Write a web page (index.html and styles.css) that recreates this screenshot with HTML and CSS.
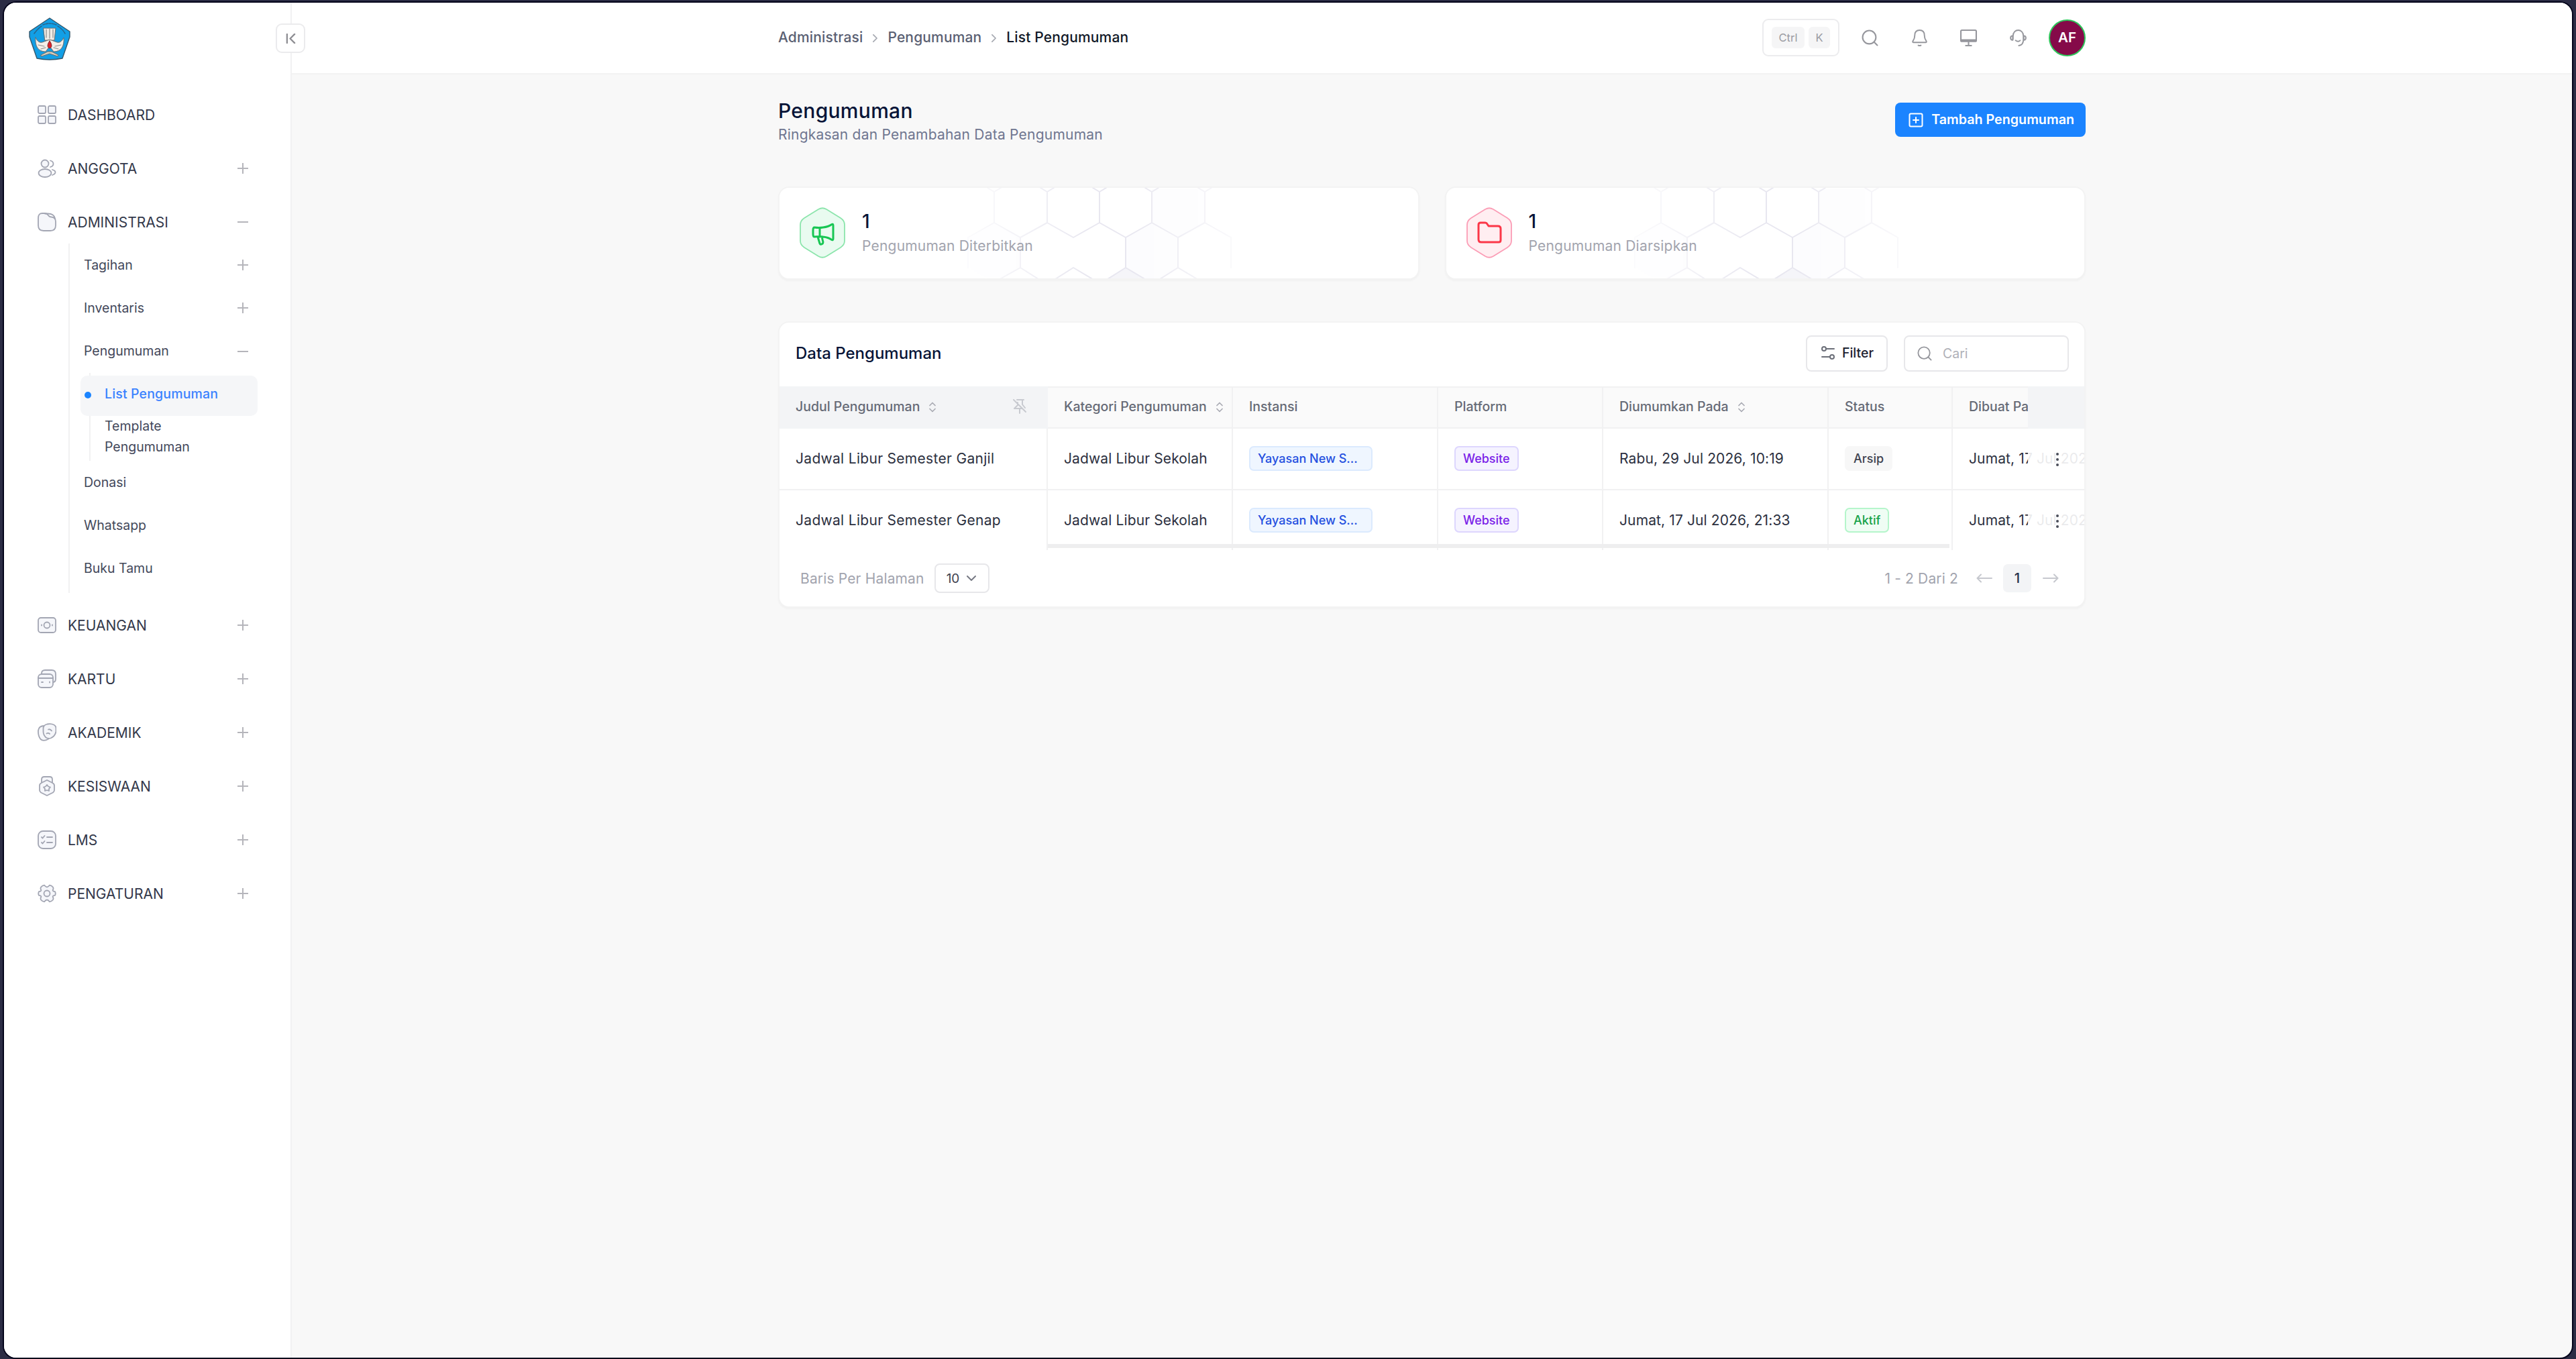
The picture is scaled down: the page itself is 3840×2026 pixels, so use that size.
FILE: index.html
```html
<!DOCTYPE html>
<html lang="id">
<head>
  <meta charset="UTF-8" />
  <meta name="viewport" content="width=device-width, initial-scale=1.0"/>
  <title>List Pengumuman</title>
  <link rel="stylesheet" href="styles.css">
</head>
<body>
  <!-- shared icons -->
  <svg class="sprite" aria-hidden="true">
    <symbol id="plus" viewBox="0 0 16 16"><path d="M8 0v16M0 8h16"/></symbol>
    <symbol id="minus" viewBox="0 0 16 16"><path d="M0 8h16"/></symbol>
    <symbol id="sort" viewBox="0 0 10 16"><path d="M1 5.5l4-4 4 4M1 10.5l4 4 4-4"/></symbol>
    <symbol id="search" viewBox="0 0 24 24"><circle cx="11" cy="11" r="9.5"/><path d="M18 18l4.5 4.5"/></symbol>
    <symbol id="dots" viewBox="0 0 6 24"><circle cx="3" cy="4" r="2"/><circle cx="3" cy="12" r="2"/><circle cx="3" cy="20" r="2"/></symbol>
    <symbol id="honeycomb" viewBox="0 0 953 138">
      <path class="comb-fill" d="M281 73l39-21 39 22v45l-39 20h-5l-34-20zM516 74l39-22 39 22v45l-28 17h-22l-28-17zM555 2h78v50l-39 22-39-22z"/>
      <path class="comb-dark" d="M516 119l-32 19h64z"/>
      <path d="M320 6v46l39 22 40-22 39 22 39-22 39 22 39-22 39 22 40-22 39 22M399 6v46M477 6v46M555 6v46M634 6v46"/>
      <path d="M310 0l10 6 10-6M389 0l10 6 10-6M467 0l10 6 10-6M545 0l10 6 10-6M624 0l10 6 10-6"/>
      <path d="M320 52l-39 22v45M359 74v45M516 74v45M594 74v45M673 74v45M325 138l34-19 30 19M408 138l30-19 32 19M486 138l30-19 32 19M564 138l30-19 32 19"/>
    </symbol>
  </svg>

  <div class="window">
    <aside class="sidebar">
      <div class="brand">
        <svg class="logo" viewBox="0 0 62 64">
          <path d="M31 1L61 21v8L50 61q-19 4-38 0L1 29v-8z" fill="#129fe6" stroke="#35576b" stroke-width="1.4" stroke-linejoin="round"/>
          <path d="M8 24q5-7 11-11M21 11q10-4 20 0M43 13q7 4 11 11" fill="none" stroke="#28668c" stroke-width="1.6" stroke-dasharray="3 1.5"/>
          <path d="M22 16h18l-2 18H24z" fill="#f0ece6" stroke="#6b6b6b" stroke-width="1"/>
          <path d="M26 18v12M31 17v14M36 18v12" stroke="#8b8b8b" stroke-width="1.2" fill="none"/>
          <path d="M10 30c-1 12 3 21 15 21l6-8 6 8c12 0 16-9 15-21-3 6-6 8-10 7l-11-4-11 4c-4 1-7-1-10-7z" fill="#f3efe9" stroke="#6b6b6b" stroke-width="1"/>
          <path d="M14 41l9 2M18 47l7-2M48 41l-9 2M44 47l-7-2" stroke="#8f8f8f" stroke-width="1.2" fill="none"/>
          <path d="M31 35c4 5 4 10 0 11-4-1-4-6 0-11z" fill="#d9232b" stroke="#6d1d1d" stroke-width=".8"/>
          <path d="M18 56l10-5h6l10 5-1 2-12-4-12 4z" fill="#d9cfbf" stroke="#6b6b6b" stroke-width="1"/>
        </svg>
        <button class="collapse" aria-label="Tutup menu"><svg viewBox="0 0 16 16"><path d="M2 1v14M14 1L7 8l7 7"/></svg></button>
      </div>

      <nav class="nav">
        <a class="nav-item">
          <svg class="nav-icon" viewBox="0 0 28 28"><rect x="1" y="1" width="11" height="11" rx="2"/><rect x="16" y="1" width="11" height="11" rx="2"/><rect x="1" y="16" width="11" height="11" rx="2"/><rect x="16" y="16" width="11" height="11" rx="2"/></svg>
          <span>DASHBOARD</span>
        </a>
        <a class="nav-item">
          <svg class="nav-icon" viewBox="0 0 28 28"><circle cx="11" cy="7" r="5.5"/><ellipse cx="11" cy="21" rx="9.5" ry="6"/><path class="line" d="M19 2.500c6 1.500 6 8 0 9.500M22 16c6 1.500 6 6 0 8"/></svg>
          <span>ANGGOTA</span><svg class="toggle"><use href="#plus"/></svg>
        </a>
        <div class="nav-group">
          <a class="nav-item">
            <svg class="nav-icon" viewBox="0 0 28 28"><path d="M1 8q0-7 6-7h4q3 0 5 3 1.500 2.500 4.500 2.500 6.500.5 6.500 7V19q0 8-8 8H9q-8 0-8-8z"/><path class="line" d="M11 1.500h5q8 0 10 7"/></svg>
            <span>ADMINISTRASI</span><svg class="toggle"><use href="#minus"/></svg>
          </a>
          <div class="submenu">
            <a class="sub-item"><span>Tagihan</span><svg class="toggle"><use href="#plus"/></svg></a>
            <a class="sub-item"><span>Inventaris</span><svg class="toggle"><use href="#plus"/></svg></a>
            <a class="sub-item"><span>Pengumuman</span><svg class="toggle"><use href="#minus"/></svg></a>
            <div class="nested">
              <a class="nested-item active">List Pengumuman</a>
              <a class="nested-item">Template Pengumuman</a>
            </div>
            <a class="sub-item"><span>Donasi</span></a>
            <a class="sub-item"><span>Whatsapp</span></a>
            <a class="sub-item"><span>Buku Tamu</span></a>
          </div>
        </div>
        <a class="nav-item">
          <svg class="nav-icon" viewBox="0 0 28 28"><rect x="1" y="3" width="26" height="22" rx="4"/><circle cx="14" cy="14" r="4.500"/><path class="line" d="M6 13.500v1M22 13.500v1"/></svg>
          <span>KEUANGAN</span><svg class="toggle"><use href="#plus"/></svg>
        </a>
        <a class="nav-item">
          <svg class="nav-icon" viewBox="0 0 28 28"><path d="M6 6q0-5 5-5h10q6 0 6 6v7q0 5-4 5"/><rect x="1" y="7" width="22" height="20" rx="5"/><path class="line" d="M1 13h22M6 19h2M18 18.500v1"/></svg>
          <span>KARTU</span><svg class="toggle"><use href="#plus"/></svg>
        </a>
        <a class="nav-item">
          <svg class="nav-icon" viewBox="0 0 28 28"><path d="M10 4q-8 0-9 7-.5 8 3.500 13 4 4 12-.5z"/><path d="M8.500 8q0-5 6-6.500 4-.8 7 0 6 1.500 6 6v5q-1 7-8 10-4 1-7-1-4-4-4-9z"/><path class="line" d="M16 9.500q3-1 5 2M13.500 15.500q2.500-1.500 4.500.5"/></svg>
          <span>AKADEMIK</span><svg class="toggle"><use href="#plus"/></svg>
        </a>
        <a class="nav-item">
          <svg class="nav-icon tall" viewBox="0 0 28 30"><path d="M6 10V5q0-4 4-4h8q4 0 4 4v5"/><path d="M14 6l8 4q3 1.500 3 4v7q0 2-2 3.500L14 29l-9-4.500q-2-1.500-2-3.500v-7q0-2.500 3-4z"/><path d="M14 13l2 2.500 3 1-2 2.500v3l-3-1-3 1v-3l-2-2.500 3-1z"/></svg>
          <span>KESISWAAN</span><svg class="toggle"><use href="#plus"/></svg>
        </a>
        <a class="nav-item">
          <svg class="nav-icon" viewBox="0 0 28 28"><rect x="1" y="1" width="26" height="26" rx="7"/><path class="line" d="M6 10l1.500 1.500 3-3.500M14 10h8M6 18l1.500 1.500 3-3.500M14 18h8"/></svg>
          <span>LMS</span><svg class="toggle"><use href="#plus"/></svg>
        </a>
        <a class="nav-item">
          <svg class="nav-icon" viewBox="0 0 28 28"><path d="M26 11.100q1.500 2.900 0 5.800-3.500.3-3.300 2.100 1.500 2.500.2 4.500-2 2.500-5.100 2.900-1.800-2.900-3.800-2.900t-3.800 2.900q-3.100-.4-5.100-2.900-1.300-2 .2-4.500.2-1.800-3.300-2.100-1.500-2.900 0-5.800Q5.500 10.800 5.300 9q-1.500-2.500-.2-4.500 2-2.500 5.100-2.900Q12 4.500 14 4.500t3.800-2.900q3.100.4 5.100 2.900 1.300 2-.2 4.500-.2 1.800 3.300 2.100z"/><circle cx="14" cy="14" r="4.500"/></svg>
          <span>PENGATURAN</span><svg class="toggle"><use href="#plus"/></svg>
        </a>
      </nav>
    </aside>

    <div class="page">
      <header class="topbar">
        <div class="container topbar-inner">
          <div class="breadcrumb">
            <span>Administrasi</span>
            <svg viewBox="0 0 8 14"><path d="M1 1l6 6-6 6"/></svg>
            <span>Pengumuman</span>
            <svg viewBox="0 0 8 14"><path d="M1 1l6 6-6 6"/></svg>
            <span class="current">List Pengumuman</span>
          </div>
          <div class="tools">
            <div class="shortcut"><kbd>Ctrl</kbd><kbd>K</kbd></div>
            <svg class="tool"><use href="#search"/></svg>
            <svg class="tool" viewBox="0 0 24 26"><path d="M12 1C6 1 4.500 5 4.500 9c0 5-1 6-3 9-.5 1.500 0 2 1 2h19c1 0 1.500-.5 1-2-2-3-3-4-3-9 0-4-1.500-8-7.500-8z"/><path d="M10 24.500q2 1 4 0"/></svg>
            <svg class="tool" viewBox="0 0 24 24"><rect x="1" y="1" width="22" height="16" rx="1.500"/><path d="M1 15h22v1H1zM12 18v4M8 23h8"/></svg>
            <svg class="tool" viewBox="0 0 26 26"><path d="M5 15V10c0-12 16-12 16 0v5M4.500 9.500C0 10 0 16 4.500 16.500zM21.500 9.500c4.500.5 4.500 6.500 0 7zM21 16c0 5-2 8-7 9M9 17q4 3 7 0"/></svg>
            <div class="avatar">AF</div>
          </div>
        </div>
      </header>

      <main class="container">
        <div class="page-head">
          <div>
            <h1>Pengumuman</h1>
            <p>Ringkasan dan Penambahan Data Pengumuman</p>
          </div>
          <button class="btn-primary">
            <svg viewBox="0 0 22 22"><rect x="1.500" y="1.500" width="19" height="19" rx="2"/><path d="M11 7v8M7 11h8"/></svg>
            Tambah Pengumuman
          </button>
        </div>

        <div class="stats">
          <div class="card stat">
            <svg class="comb"><use href="#honeycomb"/></svg>
            <svg class="stat-icon green" viewBox="0 0 68 76">
              <path class="hex" d="M28 3q6-3.500 12 0l21 13q6 4 6 10v24q0 6-6 10L40 73q-6 3.500-12 0L7 60q-6-4-6-10V26q0-6 6-10z"/>
              <path d="M22 30q7 1 13 0 8-1 12-4 3-2 3 1v20q0 3-3 1-4-3-12-4-6-1-13 0-2 0-2-4v-6q0-4 2-4zM30 31v13M27 44l3 10q1 2 3 1t2-3l-2-8"/>
            </svg>
            <div>
              <div class="stat-value">1</div>
              <div class="stat-label">Pengumuman Diterbitkan</div>
            </div>
          </div>
          <div class="card stat">
            <svg class="comb"><use href="#honeycomb"/></svg>
            <svg class="stat-icon red" viewBox="0 0 68 76">
              <path class="hex" d="M28 3q6-3.500 12 0l21 13q6 4 6 10v24q0 6-6 10L40 73q-6 3.500-12 0L7 60q-6-4-6-10V26q0-6 6-10z"/>
              <path d="M18 26q0-3 3-3h7q2 0 3 2l2 3h14q4 0 4 4v17q0 3-3 3H22q-4 0-4-4z"/>
            </svg>
            <div>
              <div class="stat-value">1</div>
              <div class="stat-label">Pengumuman Diarsipkan</div>
            </div>
          </div>
        </div>

        <section class="card table-card">
          <div class="table-head">
            <h2>Data Pengumuman</h2>
            <button class="btn-filter">
              <svg viewBox="0 0 20 22"><circle cx="4" cy="5" r="3"/><path d="M7 5h12M1 17h12"/><circle cx="16" cy="17" r="3"/></svg>
              Filter
            </button>
            <div class="search"><svg><use href="#search"/></svg><span>Cari</span></div>
          </div>

          <div class="table-wrap">
            <table>
              <colgroup>
                <col class="c-title"><col class="c-kategori"><col class="c-instansi"><col class="c-platform"><col class="c-tanggal"><col class="c-status"><col class="c-dibuat"><col class="c-aksi">
              </colgroup>
              <thead>
                <tr>
                  <th class="pinned"><div class="th">Judul Pengumuman <svg class="sort"><use href="#sort"/></svg>
                    <svg class="pin" viewBox="0 0 20 22"><path d="M1 1l18 18M6 1h10M14 1v7l4 5M7 5v4l-5 5h11M10 14v7"/></svg></div></th>
                  <th><div class="th">Kategori Pengumuman <svg class="sort"><use href="#sort"/></svg></div></th>
                  <th>Instansi</th>
                  <th>Platform</th>
                  <th><div class="th">Diumumkan Pada <svg class="sort"><use href="#sort"/></svg></div></th>
                  <th>Status</th>
                  <th>Dibuat Pada</th>
                  <th class="action"></th>
                </tr>
              </thead>
              <tbody>
                <tr>
                  <td class="pinned">Jadwal Libur Semester Ganjil</td>
                  <td>Jadwal Libur Sekolah</td>
                  <td><span class="badge blue">Yayasan New S...</span></td>
                  <td><span class="badge purple">Website</span></td>
                  <td>Rabu, 29 Jul 2026, 10:19</td>
                  <td><span class="badge gray">Arsip</span></td>
                  <td>Jumat, 17 Jul 2026, 21:33</td>
                  <td class="action"><svg class="dots"><use href="#dots"/></svg></td>
                </tr>
                <tr>
                  <td class="pinned">Jadwal Libur Semester Genap</td>
                  <td>Jadwal Libur Sekolah</td>
                  <td><span class="badge blue">Yayasan New S...</span></td>
                  <td><span class="badge purple">Website</span></td>
                  <td>Jumat, 17 Jul 2026, 21:33</td>
                  <td><span class="badge success">Aktif</span></td>
                  <td>Jumat, 17 Jul 2026, 21:33</td>
                  <td class="action"><svg class="dots"><use href="#dots"/></svg></td>
                </tr>
              </tbody>
            </table>
            <div class="scrollbar"></div>
          </div>

          <div class="pagination">
            <span>Baris Per Halaman</span>
            <div class="select">10 <svg viewBox="0 0 14 10"><path d="M1 2l6 6 6-6"/></svg></div>
            <span class="range">1 - 2 Dari 2</span>
            <svg class="arrow" viewBox="0 0 24 14"><path d="M23 7H2M7 1.500L1.500 7 7 12.500"/></svg>
            <div class="page-no">1</div>
            <svg class="arrow" viewBox="0 0 24 14"><path d="M1 7h21M17 1.500L22.500 7 17 12.500"/></svg>
          </div>
        </section>
      </main>
    </div>
  </div>
</body>
</html>
```
FILE: styles.css
```css
:root {
  --blue: #1b84ff; --text: #252f4a; --dark: #071437; --muted: #a2a4ae;
  --border: #f1f1f2; --bg: #f8f8f8; --icon: #a3a6b3;
}
* { box-sizing: border-box; }
body { margin: 0; height: 2026px; padding: 4px 6px 2px; background: #2b2c44; font-family: Inter, sans-serif; font-size: 21px; color: var(--text); overflow: hidden; }
h1, h2, p { margin: 0; font-weight: 500; }
button { font-family: inherit; cursor: pointer; }
svg { fill: none; stroke: currentColor; stroke-width: 2; stroke-linecap: round; stroke-linejoin: round; flex: none; }
.sprite { position: absolute; width: 0; height: 0; }
.window { display: flex; height: 2020px; background: var(--bg); border-radius: 18px; box-shadow: 0 0 0 2px #04041a; }

/* Sidebar */
.sidebar { width: 429px; background: #fff; border-right: 2px solid var(--border); border-radius: 18px 0 0 18px; }
.brand { display: flex; align-items: flex-start; justify-content: space-between; height: 135px; padding: 22px 0 0 37px; }
.logo { width: 62px; height: 64px; }
.collapse { display: flex; align-items: center; justify-content: center; width: 44px; height: 44px; margin: 9px -22px 0 0; background: #fff; border: 2px solid #ebebed; border-radius: 9px; color: #8e8e93; position: relative; z-index: 1; }
.collapse svg { width: 15px; height: 15px; stroke-width: 2.5; }
.nav { display: flex; flex-direction: column; gap: 16px; padding: 0 49px 0 50px; }
.nav-item { display: flex; align-items: center; height: 64px; padding-right: 14px; color: #33384a; }
.nav-item span, .sub-item span { flex: 1; }
.nav-icon { width: 28px; height: 28px; margin-right: 17px; color: var(--icon); fill: #f5f6fa; stroke-width: 1.8; }
.nav-icon.tall { height: 30px; }
.nav-icon .line { fill: none; }
.toggle { width: 16px; height: 16px; color: #b5b5bb; }
.submenu { margin-left: 46px; padding-left: 21px; border-left: 2px solid var(--border); height: 521px; font-size: 19.5px; color: #43485a; }
.sub-item { display: flex; align-items: center; height: 64.3px; padding-right: 14px; }
.sub-item span { padding-bottom: 1px; }
.nested { margin: 0 0 0 8px; padding: 4px 0 5px; border-left: 2px solid var(--border); }
.nested-item { display: block; padding-left: 21px; padding-right: 80px; line-height: 31px; }
.nested-item.active { display: flex; align-items: center; height: 60px; margin-left: -15px; padding: 0 0 5px 6px; background: #f5f6f8; border-radius: 10px; color: #3b82ff; font-weight: 500; letter-spacing: 0.15px; position: relative; }
.nested-item.active::before { content: ""; width: 10px; height: 10px; margin: 4px 20px 0 0; border-radius: 50%; background: var(--blue); }

/* Topbar */
.page { flex: 1; min-width: 0; }
.container { width: 1949px; margin: 0 auto; }
.topbar { height: 107px; background: #fff; border-bottom: 2px solid #f3f3f3; border-radius: 0 18px 0 0; }
.topbar-inner { display: flex; align-items: center; justify-content: space-between; height: 104px; }
.breadcrumb { display: flex; align-items: center; gap: 15px; padding-bottom: 2px; color: #5a6072; font-weight: 500; font-size: 21px; letter-spacing: 0.15px; }
.breadcrumb svg { width: 7px; height: 12px; color: #a5a8b0; margin-top: 4px; }
.breadcrumb .current { color: #111827; }
.tools { display: flex; align-items: center; color: #96979d; }
.shortcut { display: flex; align-items: center; gap: 6px; height: 56px; padding: 0 12px; margin-right: 33px; border: 2px solid #ececee; border-radius: 9px; }
kbd { padding: 0 10.5px; line-height: 32px; background: #f5f5f6; border-radius: 6px; font-family: inherit; font-size: 16.5px; color: #9a9ba2; }
.tool { width: 25px; height: 25px; margin-right: 48.5px; }
.avatar { width: 55px; height: 55px; margin-left: -15px; border: 2px solid #2fc65b; border-radius: 50%; background: #850a49; color: #fff; font-weight: 600; font-size: 20.5px; line-height: 50px; text-align: center; }

/* Page heading */
.page-head { display: flex; align-items: flex-start; justify-content: space-between; height: 167px; padding-top: 36px; }
h1 { font-size: 30px; line-height: 36px; letter-spacing: 0.3px; color: var(--dark); }
.page-head p { font-size: 21px; line-height: 36px; letter-spacing: 0.22px; color: #6f7690; font-weight: 400; }
.btn-primary { display: flex; align-items: center; gap: 12px; height: 51px; margin-top: 6px; padding: 0 17px 2px 20px; border: 0; border-radius: 8px; background: var(--blue); color: #fff; font-size: 19.7px; font-weight: 600; }
.btn-primary svg { width: 22px; height: 22px; margin-top: 2px; }

/* Stat cards */
.card { background: #fff; border: 2px solid #f3f3f3; border-radius: 16px; box-shadow: 0 2px 3px rgba(0,0,0,0.03); }
.stats { display: grid; grid-template-columns: 1fr 1fr; gap: 38px; margin-bottom: 62px; }
.stat { display: flex; align-items: center; height: 139px; padding-left: 30px; overflow: hidden; position: relative; }
.stat-icon { width: 68px; height: 76px; margin: 0 25px 2px 0; stroke-width: 3; position: relative; }
.stat-icon .hex { stroke-width: 1.8; }
.green { color: #17c653; }
.green .hex { fill: #e9fbf0; stroke: #8ce5ac; }
.red { color: #fb3748; }
.red .hex { fill: #ffeef1; stroke: #fb9db6; }
.stat-value { margin-top: 3px; font-size: 28px; line-height: 34px; font-weight: 500; color: var(--dark); position: relative; }
.stat-label { margin-top: 1px; line-height: 38px; letter-spacing: 0.2px; color: var(--muted); position: relative; }
.comb { position: absolute; left: 0; top: 0; width: 953px; height: 138px; color: #e8e7f0; -webkit-mask-image: linear-gradient(90deg, transparent 26%, #000 48%, #000 55%, transparent 76%); mask-image: linear-gradient(90deg, transparent 26%, #000 48%, #000 55%, transparent 76%); }
.comb-fill { fill: #fcfcfe; stroke: none; }
.comb-dark { fill: #f5f5f9; stroke: none; }

/* Table */
.table-card { height: 427px; overflow: hidden; }
.table-head { display: flex; align-items: center; height: 95px; padding: 0 23px 4px 24px; }
h2 { flex: 1; font-size: 24px; color: var(--dark); }
.btn-filter { display: flex; align-items: center; gap: 11px; height: 54px; margin-right: 24px; padding: 0 19px 2px 21px; background: #fff; border: 2px solid #e7e7ea; border-radius: 8px; color: #1d2130; font-size: 19.5px; font-weight: 500; }
.btn-filter svg { width: 20px; height: 22px; color: #6b6e78; }
.search { display: flex; align-items: center; gap: 16px; width: 246px; height: 54px; padding-left: 18px; border: 2px solid #e7e7ea; border-radius: 8px; color: #b0b1b8; font-size: 19.5px; }
.search svg { width: 22px; height: 22px; color: #96979d; }
.table-wrap { overflow: hidden; position: relative; height: 244px; }
table { width: 2093px; table-layout: fixed; border-collapse: separate; border-spacing: 0; }
.c-title { width: 400px; } .c-kategori { width: 276px; } .c-instansi { width: 306px; } .c-platform { width: 246px; }
.c-tanggal { width: 336px; } .c-status { width: 185px; } .c-dibuat { width: 260px; } .c-aksi { width: 84px; }
th, td { padding: 0 0 0 24px; text-align: left; white-space: nowrap; border-right: 2px solid var(--border); border-bottom: 2px solid var(--border); }
th { height: 63px; padding-bottom: 4px; background: #fafafa; border-top: 2px solid var(--border); font-size: 19.5px; font-weight: 500; color: #666a76; }
th.pinned, th.action { background: #f3f4f6; border-color: #f3f4f6; }
td { height: 92px; padding-bottom: 1px; color: #2c3040; letter-spacing: 0.12px; }
td.pinned { letter-spacing: 0.3px; }
tr:last-child td { height: 89px; border-bottom: 0; }
.th { display: flex; align-items: center; }
.sort { width: 10px; height: 16px; margin: 3px 0 0 14px; color: #a9abb3; stroke-width: 1.7; }
.pin { width: 20px; height: 22px; margin: 0 30px 0 auto; color: #c8cad0; }
.action { position: sticky; right: 0; padding: 0 0 0 3px; text-align: center; border-right: 0; }
td.action { background: rgba(255,255,255,0.9); }
.dots { width: 6px; height: 24px; fill: #4b4e5a; stroke: none; vertical-align: middle; }
.scrollbar { position: absolute; left: 400px; bottom: 3px; width: 1344px; height: 6px; background: #eeeeef; }
.badge { display: inline-block; height: 37px; padding: 0 11px; line-height: 33px; letter-spacing: 0; border: 2px solid; border-radius: 7px; font-size: 18px; font-weight: 500; vertical-align: middle; }
.badge.blue { width: 184px; background: #eff6ff; border-color: #dbeafe; color: #2450e0; }
.badge.purple { background: #f5f3ff; border-color: #ddd6fe; color: #7a22e8; }
.badge.gray { background: #f7f7f7; border-color: #f7f7f7; color: #3f4350; }
.badge.success { background: #effdf4; border-color: #b5f5cb; color: #17a34a; }

/* Pagination */
.pagination { display: flex; align-items: center; height: 84px; padding: 0 38px 0 31px; color: var(--muted); }
.pagination span { letter-spacing: 0.15px; }
.select { display: flex; align-items: center; gap: 11px; height: 44px; width: 82px; margin-left: 15px; padding-left: 16px; border: 2px solid #e7e7ea; border-radius: 8px; color: #3d414e; font-size: 19px; }
.select svg { width: 14px; height: 10px; color: #777a84; }
.range { margin-left: auto; margin-right: 27px; }
.arrow { width: 24px; height: 14px; color: #c6c8ce; }
.page-no { width: 42px; height: 42px; margin: 0 17px 0 16px; border-radius: 7px; background: #f3f4f6; color: #252f4a; font-weight: 500; font-size: 20px; line-height: 42px; text-align: center; }
```
